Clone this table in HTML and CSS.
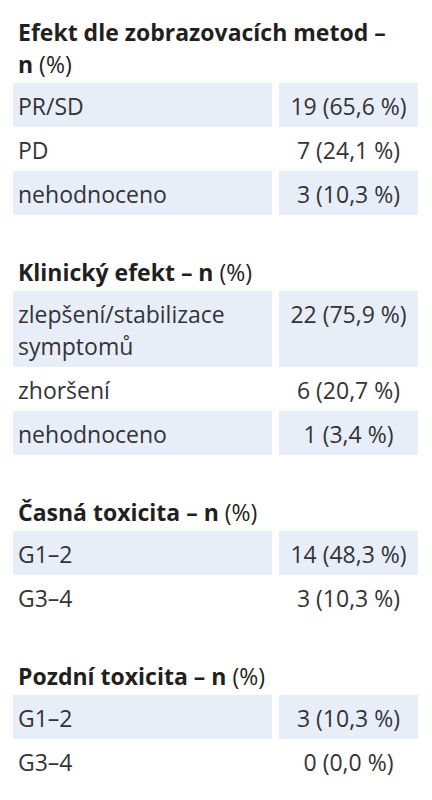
FILE: index.html
```html
<!DOCTYPE html>
<html lang="cs">
<head>
    <meta charset="UTF-8">
    <meta name="viewport" content="width=device-width, initial-scale=1.0">
    <title>Výsledky léčby</title>
    <link rel="stylesheet" href="styles.css">
</head>
<body>

    <div class="container">
        <!-- Efekt dle zobrazovacích metod -->
        <div class="sekce">
            <h2><strong>Efekt dle zobrazovacích metod – n</strong> (%)</h2>
            <div class="tabulka">
                <div class="radek stin"><div class="bunka">PR/SD</div><div class="bunka hodnota">19 (65,6 %)</div></div>
                <div class="radek"><div class="bunka">PD</div><div class="bunka hodnota">7 (24,1 %)</div></div>
                <div class="radek stin"><div class="bunka">nehodnoceno</div><div class="bunka hodnota">3 (10,3 %)</div></div>
            </div>
        </div>

        <!-- Klinický efekt -->
        <div class="sekce">
            <h2><strong>Klinický efekt – n</strong> (%)</h2>
            <div class="tabulka">
                <div class="radek stin"><div class="bunka">zlepšení/stabilizace symptomů</div><div class="bunka hodnota">22 (75,9 %)</div></div>
                <div class="radek"><div class="bunka">zhoršení</div><div class="bunka hodnota">6 (20,7 %)</div></div>
                <div class="radek stin"><div class="bunka">nehodnoceno</div><div class="bunka hodnota">1 (3,4 %)</div></div>
            </div>
        </div>

        <!-- Časná toxicita -->
        <div class="sekce">
            <h2><strong>Časná toxicita – n</strong> (%)</h2>
            <div class="tabulka">
                <div class="radek stin"><div class="bunka">G1–2</div><div class="bunka hodnota">14 (48,3 %)</div></div>
                <div class="radek"><div class="bunka">G3–4</div><div class="bunka hodnota">3 (10,3 %)</div></div>
            </div>
        </div>

        <!-- Pozdní toxicita -->
        <div class="sekce">
            <h2><strong>Pozdní toxicita – n</strong> (%)</h2>
            <div class="tabulka">
                <div class="radek stin"><div class="bunka">G1–2</div><div class="bunka hodnota">3 (10,3 %)</div></div>
                <div class="radek"><div class="bunka">G3–4</div><div class="bunka hodnota">0 (0,0 %)</div></div>
            </div>
        </div>
    </div>

</body>
</html>
```

FILE: styles.css
```css
/* Reset a základ */
* {
    margin: 0;
    padding: 0;
    box-sizing: border-box;
}

body {
    font-family: "Open Sans", "Noto Sans", sans-serif;
    font-size: 23px;
    line-height: 32px;
    color: #333338;
    background-color: #fff;
}

.container {
    padding: 16px 14px 0 13px;
}

.sekce {
    margin-bottom: 41px;
}

h2 {
    font-size: 23px;
    font-weight: normal;
    line-height: 32px;
    color: #231f20;
    padding-left: 5px;
    padding-right: 15px;
    margin-bottom: 3px;
}

h2 strong {
    font-weight: bold;
}

.radek {
    display: grid;
    grid-template-columns: 259px 139px;
    column-gap: 7px;
}

.bunka {
    padding: 7px 5px 5px 5px;
}

.stin .bunka {
    background-color: #e8eef7;
}

.hodnota {
    text-align: center;
}
```
